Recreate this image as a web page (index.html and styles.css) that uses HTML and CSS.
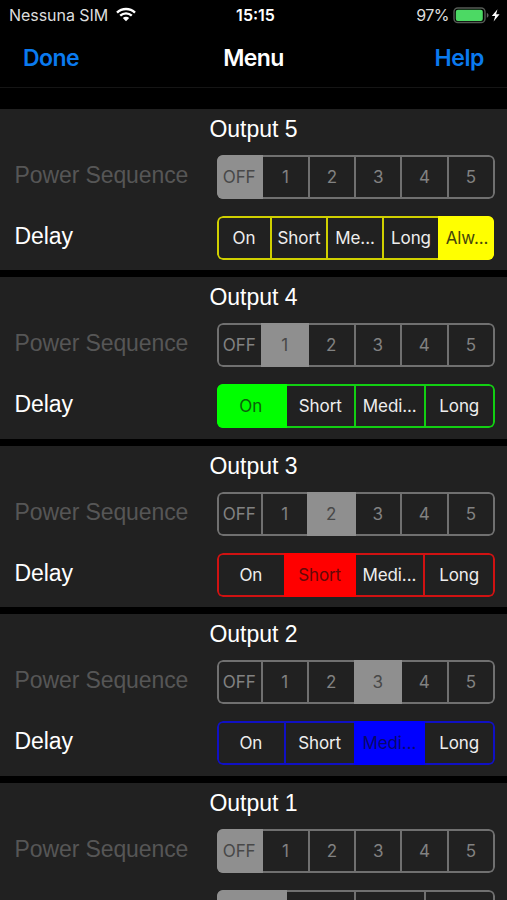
FILE: index.html
```html
<!DOCTYPE html>
<html lang="it">
<head>
<meta charset="utf-8">
<title>Menu</title>
<link rel="stylesheet" href="styles.css">
</head>
<body>
<header>
  <div class="status">
    <div class="carrier"><span class="carrier-name">Nessuna SIM</span>
      <svg class="wifi" width="20" height="15" viewBox="0 0 20 15" fill="none" stroke="#fff" stroke-width="2.4"><path d="M1 5.6C6 .8 14 .8 19 5.6M4.2 8.7c3.4-3.1 8.2-3.1 11.6 0"/><path d="M6.8 11.1c1.9-1.7 4.5-1.7 6.4 0L10 14.2z" fill="#fff" stroke="none"/></svg>
    </div>
    <span class="time">15:15</span>
    <div class="power"><span class="percent">97%</span>
      <svg width="49" height="17" viewBox="0 0 49 17"><rect x="1" y="1" width="31" height="14.5" rx="3.8" fill="none" stroke="#555b55" stroke-width="1.4"/><rect x="2.8" y="2.7" width="27" height="11.2" rx="2" fill="#4cd964"/><path d="M33.8 6c2.3.7 2.3 4 0 4.7z" fill="#626262"/><path d="M44.5 2.2 38.8 9.1h3.4L40.6 14.4 46.6 7.3h-3.5z" fill="#fff"/></svg>
    </div>
  </div>
  <nav><a class="done">Done</a><h1>Menu</h1><a class="help">Help</a></nav>
</header>
<main>
  <section>
    <h2>Output 5</h2>
    <div class="row"><span class="label muted">Power Sequence</span><div class="segments gray"><b class="on">OFF</b><b>1</b><b>2</b><b>3</b><b>4</b><b>5</b></div></div>
    <div class="row"><span class="label">Delay</span><div class="segments yellow"><b>On</b><b>Short</b><b>Me...</b><b>Long</b><b class="on">Alw...</b></div></div>
  </section>
  <section>
    <h2>Output 4</h2>
    <div class="row"><span class="label muted">Power Sequence</span><div class="segments gray"><b>OFF</b><b class="on">1</b><b>2</b><b>3</b><b>4</b><b>5</b></div></div>
    <div class="row"><span class="label">Delay</span><div class="segments green"><b class="on">On</b><b>Short</b><b>Medi...</b><b>Long</b></div></div>
  </section>
  <section>
    <h2>Output 3</h2>
    <div class="row"><span class="label muted">Power Sequence</span><div class="segments gray"><b>OFF</b><b>1</b><b class="on">2</b><b>3</b><b>4</b><b>5</b></div></div>
    <div class="row"><span class="label">Delay</span><div class="segments red"><b>On</b><b class="on">Short</b><b>Medi...</b><b>Long</b></div></div>
  </section>
  <section>
    <h2>Output 2</h2>
    <div class="row"><span class="label muted">Power Sequence</span><div class="segments gray"><b>OFF</b><b>1</b><b>2</b><b class="on">3</b><b>4</b><b>5</b></div></div>
    <div class="row"><span class="label">Delay</span><div class="segments blue"><b>On</b><b>Short</b><b class="on">Medi...</b><b>Long</b></div></div>
  </section>
  <section>
    <h2>Output 1</h2>
    <div class="row"><span class="label muted">Power Sequence</span><div class="segments gray"><b class="on">OFF</b><b>1</b><b>2</b><b>3</b><b>4</b><b>5</b></div></div>
    <div class="row"><div class="segments gray last"><b class="on"></b><b></b><b></b><b></b></div></div>
  </section>
</main>
</body>
</html>
```
FILE: styles.css
```css
* { box-sizing: border-box; }
html, body { height: 100%; }
body { margin: 0; background: #000; color: #fff; overflow: hidden; font-family: Inter, "Liberation Sans", sans-serif; }
header { height: 88px; border-bottom: 1px solid #151515; }
.status { height: 30px; display: grid; grid-template-columns: 1fr auto 1fr; align-items: center; padding: 0 5px 0 9px; font-size: 16px; color: #ddd; }
.carrier, .power { display: flex; align-items: center; }
.carrier { gap: 8px; }
.carrier-name { letter-spacing: -.05px; }
.power { justify-content: flex-end; gap: 4px; }
.percent { letter-spacing: -.5px; }
.wifi { margin-top: -2px; }
.time { font-weight: 600; color: #fff; }
nav { height: 56px; display: grid; grid-template-columns: 1fr auto 1fr; align-items: center; padding: 0 23px; font-size: 23px; font-weight: 600; letter-spacing: -.6px; }
nav a { color: #0a7aef; }
nav h1 { margin: 0; font-size: 23px; font-weight: 600; }
.help { text-align: right; letter-spacing: -.4px; }
main { display: flex; flex-direction: column; gap: 7px; padding-top: 20.8px; }
section { height: 161.5px; flex: none; background: #212121; padding-top: 6px; }
h2 { margin: 0; height: 40px; font: 23px/28px "Liberation Sans", sans-serif; text-align: center; }
.row { display: flex; justify-content: space-between; height: 44px; margin-bottom: 17px; padding: 0 12px 0 14.5px; }
.label { font: 23px/40px "Liberation Sans", sans-serif; letter-spacing: -.1px; }
.muted { color: #565656; }
.segments { position: relative; width: 278px; display: flex; border-radius: 6px; overflow: hidden; background: #212121; }
.segments::after { content: ""; position: absolute; inset: 0; border: 2px solid var(--line); border-radius: 6px; }
.segments b { flex: 1 1 0; min-width: 0; display: flex; align-items: center; justify-content: center; font-weight: 400; font-size: 17px; letter-spacing: -.1px; color: #eee; white-space: nowrap; }
.segments b:first-child { margin-right: -1px; }
.segments b:last-child:not(.on) { margin-right: 2px; }
.segments b + b { border-left: 2px solid var(--line); }
.segments .on { position: relative; z-index: 1; background: var(--fill); border-color: var(--fill); color: var(--ink); }
.segments .on:not(:last-child) { margin-right: -2px; padding-right: 2px; }
.last { margin-left: auto; }
.gray { --line: #707070; --fill: #8f8f8f; --ink: #484848; }
.segments.gray b:not(.on) { color: #828282; }
.yellow { --line: #d0d000; --fill: #ff0; --ink: #45450c; width: 277px; margin-right: 1px; }
.green { --line: #12cf12; --fill: #0f0; --ink: #0b620b; }
.red { --line: #d01212; --fill: #f00; --ink: #650808; }
.blue { --line: #1010c4; --fill: #00f; --ink: #08086c; }
```
